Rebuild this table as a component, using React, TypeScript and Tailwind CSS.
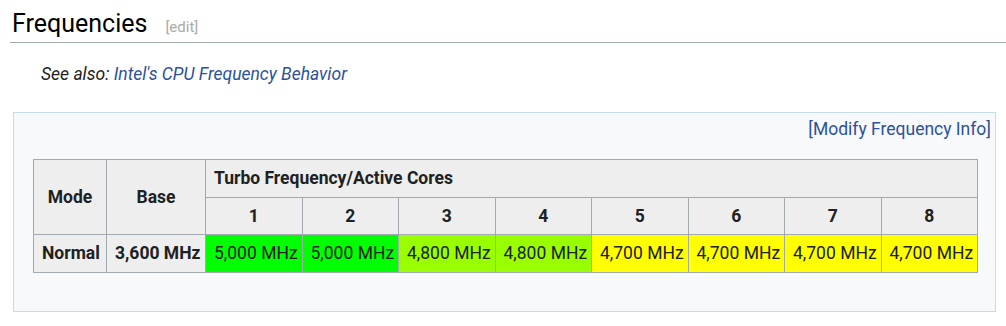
const cores = [
  { n: 1, freq: "5,000 MHz", bg: "bg-[#00ff00]" },
  { n: 2, freq: "5,000 MHz", bg: "bg-[#00ff00]" },
  { n: 3, freq: "4,800 MHz", bg: "bg-[#99ff00]" },
  { n: 4, freq: "4,800 MHz", bg: "bg-[#99ff00]" },
  { n: 5, freq: "4,700 MHz", bg: "bg-[#ffff00]" },
  { n: 6, freq: "4,700 MHz", bg: "bg-[#ffff00]" },
  { n: 7, freq: "4,700 MHz", bg: "bg-[#ffff00]" },
  { n: 8, freq: "4,700 MHz", bg: "bg-[#ffff00]" },
]

const th = "border border-[#a2a9b1] bg-[#eeeeee] font-bold text-[#202122] px-2"
const td = "border border-[#a2a9b1] text-[#202122] px-2 text-center whitespace-nowrap"

export default function App() {
  return (
    <div className="w-[1006px] h-[326px] bg-white font-['Roboto',sans-serif] text-[#202122] overflow-hidden">
      {/* Heading */}
      <div className="ml-[10px] pt-[6px] pl-[2px] border-b border-[#a2a9b1] flex items-baseline">
        <h2 className="text-[25px] leading-[36px] text-black">Frequencies</h2>
        <span className="ml-[18px] text-[15px] text-[#aaaaaa]">[edit]</span>
      </div>

      {/* See also */}
      <div className="mt-[20px] ml-[41px] text-[17.5px] leading-[22px] italic">
        <span className="text-[#222222]">See also: </span>
        <a className="text-[#2b529c]">Intel's CPU Frequency Behavior</a>
      </div>

      {/* Frequency box */}
      <div className="mt-[27px] ml-[13px] w-[983px] border border-[#c4dce6] bg-[#f8f9fa] pt-[4px] pr-[4px] pb-[38px]">
        <div className="text-right text-[17.5px] leading-[24px] text-[#2b529c]">[Modify Frequency Info]</div>
        <table className="mt-[18px] ml-[19px] w-[945px] table-fixed border-collapse text-[17.5px]">
          <colgroup>
            <col className="w-[73px]" />
            <col className="w-[99px]" />
            {cores.map((c) => (
              <col key={c.n} />
            ))}
          </colgroup>
          <thead>
            <tr className="h-[38px]">
              <th rowSpan={2} className={`${th} text-center`}>Mode</th>
              <th rowSpan={2} className={`${th} text-center`}>Base</th>
              <th colSpan={8} className={`${th} text-left`}>Turbo Frequency/Active Cores</th>
            </tr>
            <tr className="h-[37px]">
              {cores.map((c) => (
                <th key={c.n} className={`${th} text-center`}>{c.n}</th>
              ))}
            </tr>
          </thead>
          <tbody>
            <tr className="h-[38px]">
              <th className={`${th} text-center px-1`}>Normal</th>
              <th className={`${th} text-center px-1 whitespace-nowrap`}>3,600 MHz</th>
              {cores.map((c) => (
                <td key={c.n} className={`${td} ${c.bg}`}>{c.freq}</td>
              ))}
            </tr>
          </tbody>
        </table>
      </div>
    </div>
  )
}
